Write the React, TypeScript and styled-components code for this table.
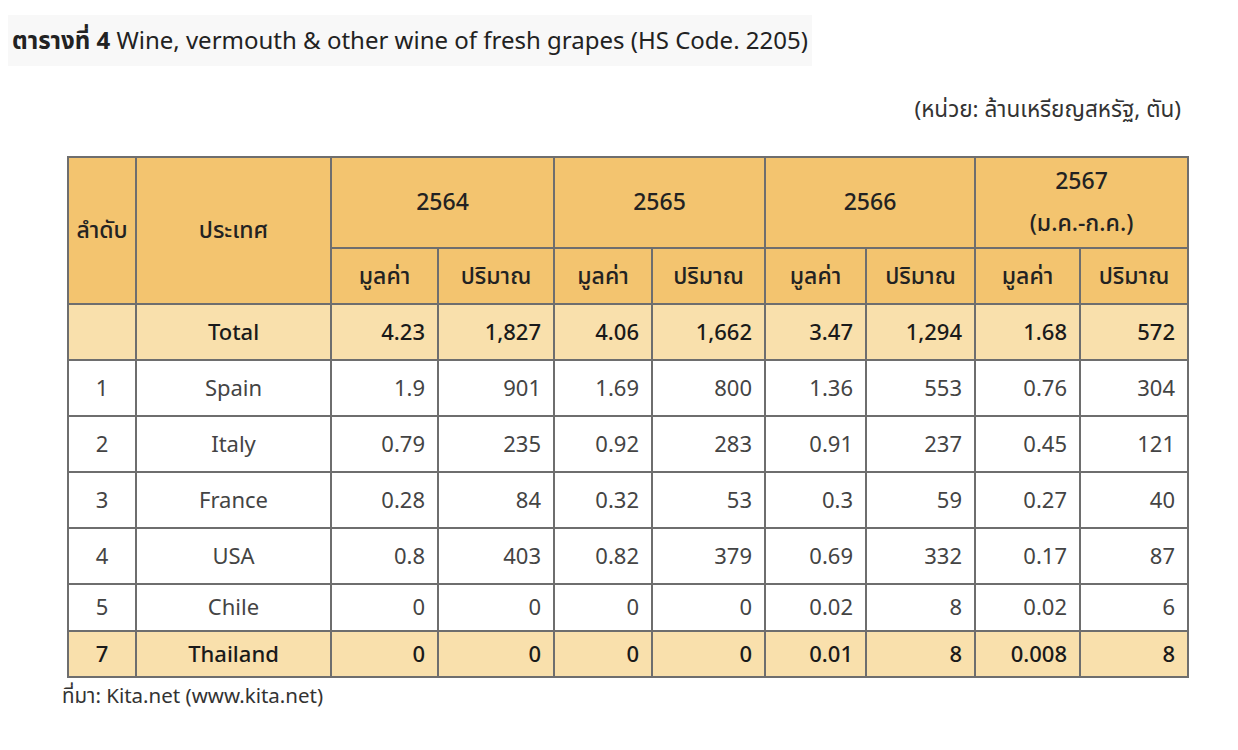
import React from "react";
import styled, {createGlobalStyle} from "styled-components";

const GlobalStyle = createGlobalStyle`
    body {
        margin: 0;
        background: #fff;
        font-family: "Noto Sans", "Noto Sans Thai", "Open Sans", sans-serif;
        color: #1a1a1a;
    }
`;

const StyledPage = styled.div`
    width: 1238px;
    height: 750px;
    padding: 15px 0 0 0;
    box-sizing: border-box;
`;

const StyledTitle = styled.div`
    display: inline-block;
    margin-left: 8px;
    padding: 8px 4px 9px 4px;
    background-color: #f8f8f8;
    font-size: 24px;
    line-height: 34px;
    color: #222;
    b {
        font-weight: 700;
    }
`;

const StyledUnit = styled.div`
    text-align: right;
    margin: 28px 57px 32px 0;
    font-size: 22.5px;
    line-height: 30px;
    color: #333;
`;

const StyledTable = styled.table`
    margin-left: 67px;
    border-collapse: collapse;
    table-layout: fixed;
    width: 1120px;
    font-size: 22px;
`;

const StyledHead = styled.th<{ $h?: number }>`
    background-color: #f3c46f;
    border: 2px solid #6e6e6e;
    font-weight: 500;
    font-size: 23px;
    height: ${p => p.$h ?? 54}px;
    padding: 0 0 3px 0;
    box-sizing: border-box;
    text-align: center;
    line-height: 42px;
    color: #222;
`;

const StyledRow = styled.tr<{ $bg?: string; $bold?: boolean; $h?: number }>`
    background-color: ${p => p.$bg ?? "#fff"};
    font-weight: ${p => (p.$bold ? 500 : 400)};
    height: ${p => p.$h ?? 56}px;
    line-height: 30px;
    color: ${p => (p.$bold ? "#1a1a1a" : "#444")};
`;

const StyledCell = styled.td<{ $align?: string }>`
    border: 2px solid #6e6e6e;
    text-align: ${p => p.$align ?? "right"};
    padding: 0 ${p => (p.$align === "center" ? 0 : 12)}px 3px 0;
`;

const StyledSource = styled.div`
    margin: 2px 0 0 62px;
    font-size: 20.5px;
    line-height: 30px;
    color: #333;
`;

const widths = [68, 195, 107, 116, 98, 113, 101, 109, 105, 108];

const rows = [
    {no: "", name: "Total", vals: ["4.23", "1,827", "4.06", "1,662", "3.47", "1,294", "1.68", "572"], bg: "#f9e0ac", bold: true, h: 56},
    {no: "1", name: "Spain", vals: ["1.9", "901", "1.69", "800", "1.36", "553", "0.76", "304"], h: 56},
    {no: "2", name: "Italy", vals: ["0.79", "235", "0.92", "283", "0.91", "237", "0.45", "121"], h: 56},
    {no: "3", name: "France", vals: ["0.28", "84", "0.32", "53", "0.3", "59", "0.27", "40"], h: 56},
    {no: "4", name: "USA", vals: ["0.8", "403", "0.82", "379", "0.69", "332", "0.17", "87"], h: 56},
    {no: "5", name: "Chile", vals: ["0", "0", "0", "0", "0.02", "8", "0.02", "6"], h: 47},
    {no: "7", name: "Thailand", vals: ["0", "0", "0", "0", "0.01", "8", "0.008", "8"], bg: "#f9e0ac", bold: true, h: 46},
];

const years = ["2564", "2565", "2566"];

const App = () => {
    return (
        <StyledPage>
            <GlobalStyle/>
            <StyledTitle>
                <b>ตารางที่ 4</b> Wine, vermouth &amp; other wine of fresh grapes (HS Code. 2205)
            </StyledTitle>
            <StyledUnit>(หน่วย: ล้านเหรียญสหรัฐ, ตัน)</StyledUnit>
            <StyledTable>
                <colgroup>
                    {widths.map((w, i) => <col key={i} style={{width: w}}/>)}
                </colgroup>
                <thead>
                    <tr>
                        <StyledHead rowSpan={2}>ลำดับ</StyledHead>
                        <StyledHead rowSpan={2}>ประเทศ</StyledHead>
                        {years.map(y => <StyledHead key={y} colSpan={2} $h={91}>{y}</StyledHead>)}
                        <StyledHead colSpan={2} $h={91}>2567<br/>(ม.ค.-ก.ค.)</StyledHead>
                    </tr>
                    <tr>
                        {[0, 1, 2, 3].map(i => (
                            <React.Fragment key={i}>
                                <StyledHead $h={56}>มูลค่า</StyledHead>
                                <StyledHead $h={56}>ปริมาณ</StyledHead>
                            </React.Fragment>
                        ))}
                    </tr>
                </thead>
                <tbody>
                    {rows.map(r =>
                        <StyledRow key={r.name} $bg={r.bg} $bold={r.bold} $h={r.h}>
                            <StyledCell $align="center">{r.no}</StyledCell>
                            <StyledCell $align="center">{r.name}</StyledCell>
                            {r.vals.map((v, i) => <StyledCell key={i}>{v}</StyledCell>)}
                        </StyledRow>
                    )}
                </tbody>
            </StyledTable>
            <StyledSource>ที่มา: Kita.net (www.kita.net)</StyledSource>
        </StyledPage>
    )
}

export default App;
